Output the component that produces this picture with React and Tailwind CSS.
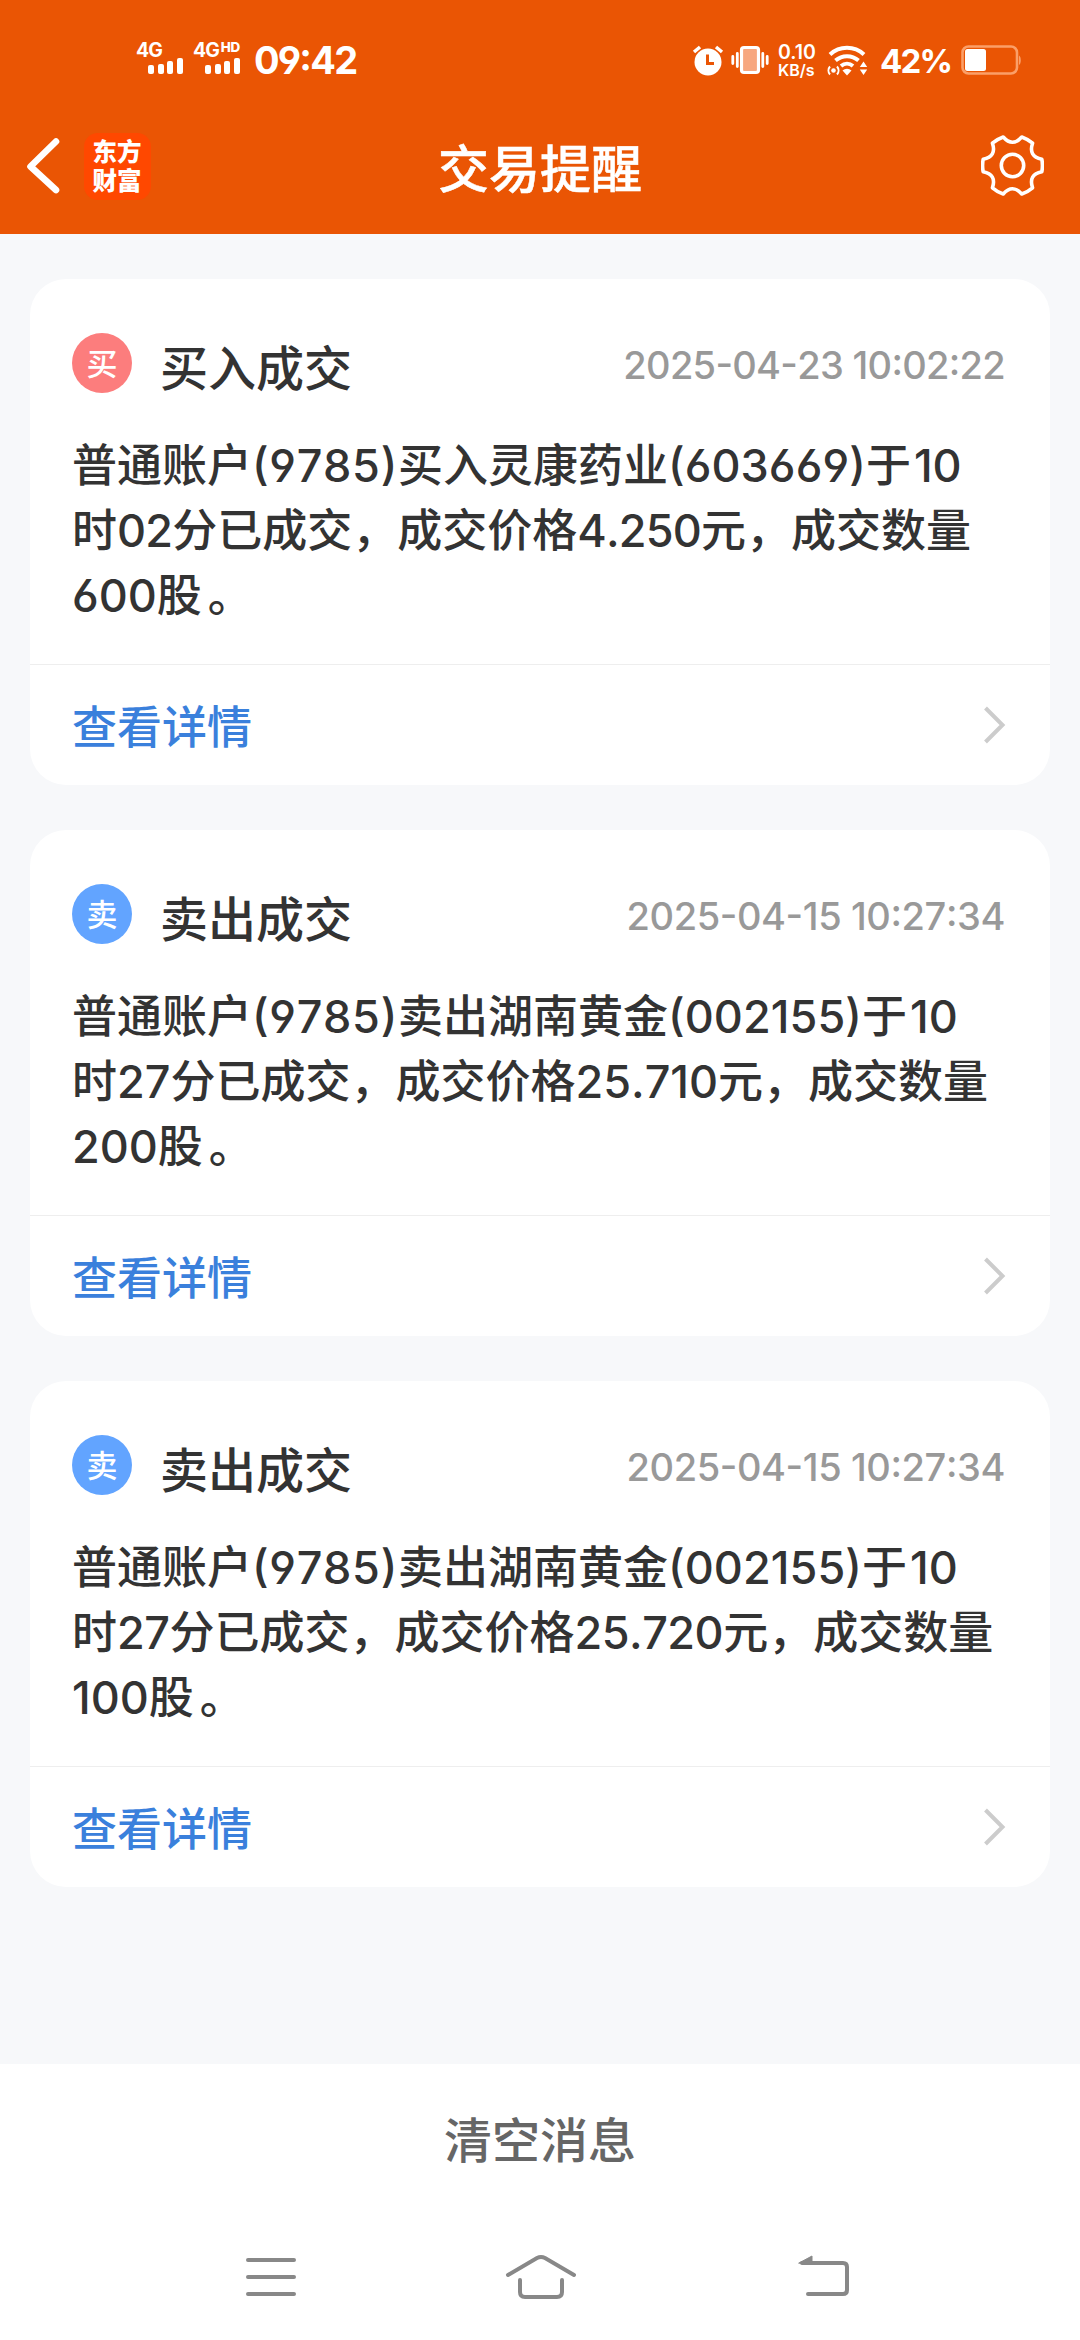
const cards = [
  {
    kind: '买', title: '买入成交', time: '2025-04-23 10:02:22', badge: 'bg-[#fc7d7d]',
    timeTracking: 'tracking-[-0.7px]', amountTracking: 'tracking-[-0.8px]',
    lines: ['普通账户(9785)买入灵康药业(603669)于10', '时02分已成交，成交价格4.250元，成交数量', '600股'],
  },
  {
    kind: '卖', title: '卖出成交', time: '2025-04-15 10:27:34', badge: 'bg-[#62a4ff]',
    timeTracking: 'tracking-[-0.4px]', amountTracking: 'tracking-normal',
    lines: ['普通账户(9785)卖出湖南黄金(002155)于10', '时27分已成交，成交价格25.710元，成交数量', '200股'],
  },
  {
    kind: '卖', title: '卖出成交', time: '2025-04-15 10:27:34', badge: 'bg-[#62a4ff]',
    timeTracking: 'tracking-[-0.4px]', amountTracking: 'tracking-[-0.5px]',
    lines: ['普通账户(9785)卖出湖南黄金(002155)于10', '时27分已成交，成交价格25.720元，成交数量', '100股'],
  },
];

function gearPath() {
  const c = 31.5;
  const at = (r, deg) => {
    const a = (deg * Math.PI) / 180;
    return `${(c + r * Math.cos(a)).toFixed(2)} ${(c + r * Math.sin(a)).toFixed(2)}`;
  };
  let d = `M${at(30, -12)}`;
  for (let k = 0; k < 6; k++) {
    const t = k * 60;
    d += ` Q${at(30.5, t)} ${at(30, t + 12)} Q${at(18, t + 30)} ${at(30, t + 48)}`;
  }
  return d + 'Z';
}

function Signal() {
  return (
    <svg className="ml-3 -mt-px block" width="36" height="18" viewBox="0 0 36 18" fill="#fff">
      <rect x="0" y="8" width="6" height="9" rx="2" />
      <rect x="10" y="7" width="6" height="10" rx="2" />
      <rect x="19" y="4" width="6" height="13" rx="2" />
      <rect x="29" y="1" width="6" height="16" rx="2" />
    </svg>
  );
}

function StatusBar() {
  return (
    <div className="flex h-[98px] items-start text-white">
      <div className="ml-[136px] mt-[43px] w-[57px]">
        <div className="h-[15px] text-[19.500px] leading-[15px] font-bold tracking-[-1px]">4G</div>
        <Signal />
      </div>
      <div className="mt-[43px] w-[61px]">
        <div className="flex h-[15px] items-start text-[19.500px] leading-[15px] font-bold tracking-[-1px] whitespace-nowrap">
          4G<span className="ml-[2px] -mt-[3px] text-[13.500px] leading-[14px] font-extrabold tracking-[-0.5px]">HD</span>
        </div>
        <Signal />
      </div>
      <div className="mt-[40px] w-[120px] text-[38px] leading-[40px] font-bold tracking-[-1.8px]">09:42</div>

      <div className="ml-auto flex">
        <svg className="mt-[45px]" width="32" height="32" viewBox="0 0 32 32" fill="none">
          <circle cx="16" cy="17" r="13.5" fill="#fff" />
          <path d="M2 7l6-5M30 7l-6-5" stroke="#fff" strokeWidth="3.5" />
          <path d="M15.500 9.500V18.500H22" stroke="#ea5504" strokeWidth="3" />
        </svg>
        <svg className="ml-[7px] mt-[45px]" width="38" height="31" viewBox="0 0 38 31" fill="none" stroke="#fff">
          <rect x="10.500" y="2.500" width="17" height="25" rx="2.500" fill="#f7a77f" strokeWidth="3.200" />
          <path d="M1.800 11.500v7M6.300 8.500v13M31.800 8.500v13M36.200 11.500v7" strokeWidth="2.800" strokeLinecap="round" />
        </svg>
        <div className="ml-[9px] mt-[43px] w-[40px] font-semibold">
          <div className="text-[19.500px] leading-[18px]">0.10</div>
          <div className="mt-[1px] text-[16px] leading-[16px]">KB/s</div>
        </div>
        <svg className="ml-[9px] mt-[45px]" width="42" height="32" viewBox="0 0 42 32" fill="none" stroke="#fff">
          <path d="M3 9.500a25 25 0 0 1 34 0M8.500 15.500a17.500 17.500 0 0 1 23 0M14 21a9.500 9.500 0 0 1 12 0" strokeWidth="4" />
          <path d="M15.500 25.500a7 7 0 0 1 9 0L20 30.500z" fill="#fff" stroke="none" />
          <circle cx="6.500" cy="25.500" r="2.300" fill="#fff" stroke="none" />
          <path d="M3 21.500a6 6 0 0 0 0 8M10 21.500a6 6 0 0 1 0 8" strokeWidth="2" />
          <path d="M36.500 16.500l3.700 5.500h-7.400zM36.500 30l3.700-5.500h-7.400z" fill="#fff" stroke="none" />
        </svg>
        <div className="ml-[11px] mt-[43px] w-[81px] text-[33px] leading-[36px] font-bold tracking-[-1.8px]">42%</div>
        <svg className="mr-[57px] mt-[45px]" width="62" height="30" viewBox="0 0 62 30" fill="none">
          <rect x="1.500" y="1.500" width="54.500" height="27" rx="6" stroke="#fb9f68" strokeWidth="2.600" />
          <rect x="4" y="4" width="21" height="22" rx="2.500" fill="#fff" />
          <path d="M58 10.500c2.400 1 2.400 8.500 0 9.500z" fill="#fb9f68" />
        </svg>
      </div>
    </div>
  );
}

function Header() {
  return (
    <header className="h-[234px] bg-[#ea5504]">
      <StatusBar />
      <div className="grid h-[136px] grid-cols-[1fr_auto_1fr] text-white">
        <div className="flex">
          <svg className="ml-[25px] mt-[39px]" width="36" height="60" viewBox="0 0 36 60" fill="none">
            <path d="M31 4.500L5.500 29.500L31 53" stroke="#fff" strokeWidth="6.600" strokeLinejoin="round" strokeLinecap="round" />
          </svg>
          <div className="ml-[23px] mt-[35px] flex h-[67px] w-[67px] flex-col items-center justify-center rounded-[14px] bg-[#ff4800] pr-px text-[24.500px] leading-[29px] font-black">
            <div>东方</div>
            <div>财富</div>
          </div>
        </div>
        <h1 className="mt-[42px] text-[51px] leading-[60px] font-medium [-webkit-text-stroke:0.5px_#fff]">交易提醒</h1>
        <svg className="ml-auto mr-[36px] mt-[36px]" width="63" height="63" viewBox="0 0 63 63" fill="none" stroke="#fff" strokeWidth="3.600" strokeLinejoin="round">
          <path d={gearPath()} />
          <circle cx="31.500" cy="31.500" r="11.200" />
        </svg>
      </div>
    </header>
  );
}

function Line({ text }) {
  return text.split(/(\([0-9]+\)|10$)/).map((part, i) => {
    if (part === '(9785)') return <span key={i} className="tracking-[0.7px]">{part}</span>;
    if (part.startsWith('(')) return <span key={i} className="tracking-[0.1px]">{part}</span>;
    if (part === '10') return <span key={i} className="ml-[3px]">{part}</span>;
    return part;
  });
}

function Card({ card }) {
  return (
    <section className="h-[506px] rounded-[36px] bg-white">
      <div className="flex h-[145px] pl-[42px] pr-[45px]">
        <div className={`mt-[54px] flex size-[60px] items-center justify-center rounded-full text-[31px] leading-[31px] font-medium text-white ${card.badge}`}>
          {card.kind}
        </div>
        <h2 className="ml-[28px] mt-[60px] text-[48px] leading-[60px] font-medium text-[#333]">{card.title}</h2>
        <time className={`ml-auto mt-[62px] text-[38px] leading-[48px] font-medium text-[#999] ${card.timeTracking}`}>{card.time}</time>
      </div>
      <div className="h-[240px] pl-[42px] pt-[9px] text-[45px] leading-[65px] font-medium whitespace-nowrap text-[#333]">
        <p><Line text={card.lines[0]} /></p>
        <p>
          {card.lines[1].split(/([0-9.]+)/).map((part, i) => (
            <span key={i} className={i % 2 ? card.amountTracking : 'tracking-normal'}>{part}</span>
          ))}
        </p>
        <p>{card.lines[2]}<span className="ml-[6px]">。</span></p>
      </div>
      <div className="flex h-[121px] items-center border-t border-[#eee] pl-[42px] pr-[44px]">
        <a className="mt-[5px] text-[45px] leading-[60px] font-medium text-[#3a80dc]">查看详情</a>
        <svg className="ml-auto" width="23" height="38" viewBox="0 0 23 38" fill="none">
          <path d="M2.500 2L19.500 19L2.500 36" stroke="#ccc" strokeWidth="4" />
        </svg>
      </div>
    </section>
  );
}

function NavBar() {
  return (
    <nav className="flex h-[128px] justify-between pl-[244px] pr-[228px] pt-[40px]">
      <svg width="54" height="48" viewBox="0 0 54 48" fill="none" stroke="#888" strokeWidth="4" strokeLinecap="round">
        <path d="M4 8H50M4 25H50M4 42H50" />
      </svg>
      <svg className="mr-[12px]" width="76" height="48" viewBox="0 0 76 48" fill="none" stroke="#888" strokeWidth="4" strokeLinecap="round">
        <path d="M5 23L34 6Q38 4 42 6L71 23" />
        <path d="M17 28V40Q17 45 22 45H54Q59 45 59 40V28" />
      </svg>
      <svg width="56" height="48" viewBox="0 0 56 48" fill="none" stroke="#888" strokeWidth="4" strokeLinecap="round">
        <path d="M6 11H47Q51 11 51 15V38Q51 42 47 42H12" />
        <path d="M3 11L16 4V11Z" fill="#888" strokeWidth="1" />
      </svg>
    </nav>
  );
}

export default function App() {
  return (
    <div className="flex h-[2340px] w-[1080px] flex-col overflow-hidden bg-[#f7f8fa] font-['Inter','Noto_Sans_CJK_SC',sans-serif] [font-feature-settings:'cv03','cv04','calt']" lang="zh-CN">
      <Header />
      <main className="flex flex-1 flex-col gap-[45px] px-[30px] pt-[45px] [font-kerning:none]">
        {cards.map((card, i) => (
          <Card key={i} card={card} />
        ))}
      </main>
      <footer className="h-[276px] bg-white">
        <button className="flex h-[154px] w-full items-center justify-center text-[48px] leading-[60px] font-medium text-[#666]">清空消息</button>
        <div className="-mt-[6px]">
          <NavBar />
        </div>
      </footer>
    </div>
  );
}
